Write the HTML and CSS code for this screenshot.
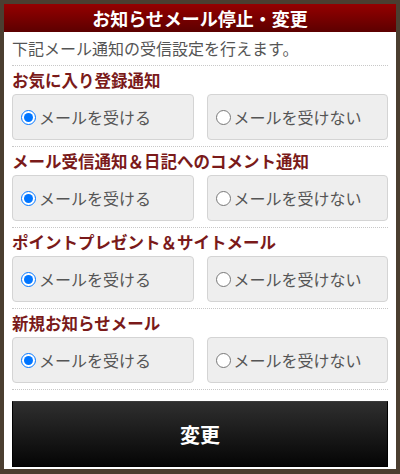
FILE: index.html
```html
<!DOCTYPE html>
<html lang="ja">
<head>
    <meta charset="UTF-8">
    <meta name="viewport" content="width=device-width, initial-scale=1.0">
    <title>お知らせメール停止・変更</title>
    <link rel="stylesheet" href="styles.css">
</head>
<body>
    <div class="panel">
        <h1 class="panel-title">お知らせメール停止・変更</h1>
        <form class="mail-form" onsubmit="return false;">
            <p class="lead">下記メール通知の受信設定を行えます。</p>

            <div class="setting">
                <h2>お気に入り登録通知</h2>
                <div class="choices">
                    <label class="choice"><input type="radio" name="favorite" value="1" checked>メールを受ける</label>
                    <label class="choice"><input type="radio" name="favorite" value="0">メールを受けない</label>
                </div>
            </div>

            <div class="setting">
                <h2>メール受信通知＆日記へのコメント通知</h2>
                <div class="choices">
                    <label class="choice"><input type="radio" name="comment" value="1" checked>メールを受ける</label>
                    <label class="choice"><input type="radio" name="comment" value="0">メールを受けない</label>
                </div>
            </div>

            <div class="setting">
                <h2>ポイントプレゼント＆サイトメール</h2>
                <div class="choices">
                    <label class="choice"><input type="radio" name="point" value="1" checked>メールを受ける</label>
                    <label class="choice"><input type="radio" name="point" value="0">メールを受けない</label>
                </div>
            </div>

            <div class="setting">
                <h2>新規お知らせメール</h2>
                <div class="choices">
                    <label class="choice"><input type="radio" name="news" value="1" checked>メールを受ける</label>
                    <label class="choice"><input type="radio" name="news" value="0">メールを受けない</label>
                </div>
            </div>

            <button type="submit" class="submit">変更</button>
        </form>
    </div>
</body>
</html>
```

FILE: styles.css
```css
body {
    margin: 0;
    background: #4b3e30;
    font-family: "Noto Sans CJK JP", "Noto Sans", sans-serif;
    color: #555;
}
.panel {
    margin: 4px 4px 0;
    background: #fff;
    padding-bottom: 2px;
}
.panel-title {
    margin: 0;
    height: 28px;
    line-height: 28px;
    text-align: center;
    font-size: 18px;
    font-weight: bold;
    color: #fff;
    background: linear-gradient(#950000, #5c0000);
}
.mail-form {
    padding: 0 8px;
}
.lead {
    margin: 0;
    padding: 6px 0 7px;
    font-size: 16px;
    line-height: 20px;
    border-bottom: 1px dotted #c8c8c8;
}
.setting {
    padding: 4px 0 6px;
    border-bottom: 1px dotted #c8c8c8;
}
.setting h2 {
    margin: 0 0 4px;
    font-size: 16.5px;
    line-height: 20px;
    font-weight: bold;
    color: #7a1a1a;
}
.choices {
    display: grid;
    grid-template-columns: 1fr 1fr;
    gap: 13px;
}
.choice {
    display: flex;
    align-items: center;
    height: 44px;
    padding-left: 3px;
    background: #eee;
    border: 1px solid #d4d4d4;
    border-radius: 4px;
    font-size: 16px;
    color: #555;
}
.choice input {
    margin: 0 3px 0 5px;
    width: 15px;
    height: 15px;
}
.submit {
    display: block;
    width: 100%;
    height: 66px;
    margin-top: 11px;
    border: 1px solid #000;
    border-top-color: #3a3a3a;
    background: linear-gradient(#2f2f2f, #050505);
    color: #fff;
    font-family: inherit;
    font-size: 20px;
    font-weight: bold;
    cursor: pointer;
}
```
